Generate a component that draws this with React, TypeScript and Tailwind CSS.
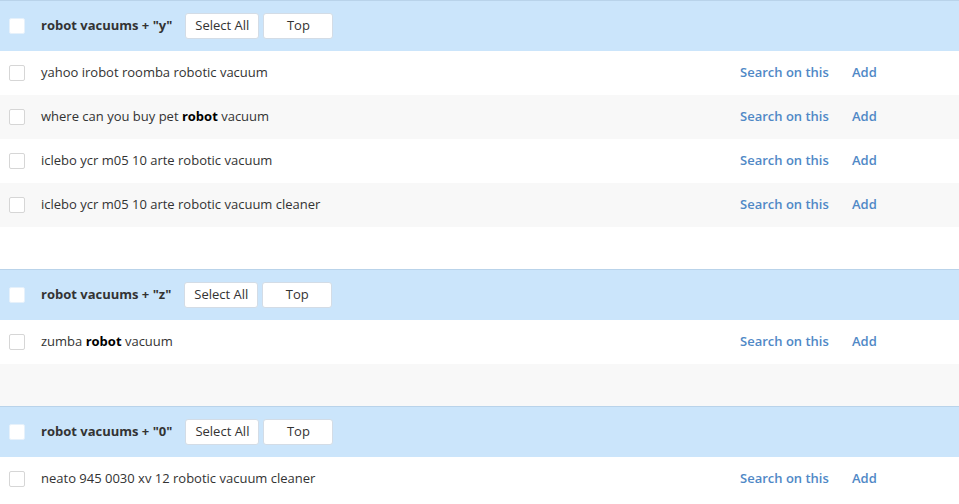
import React from 'react';

type Group = {
  suffix: string;
  rows: React.ReactNode[];
};

const GROUPS: Group[] = [
  {
    suffix: 'y',
    rows: [
      'yahoo irobot roomba robotic vacuum',
      <>
        where can you buy pet <b className="font-bold text-black">robot</b> vacuum
      </>,
      'iclebo ycr m05 10 arte robotic vacuum',
      'iclebo ycr m05 10 arte robotic vacuum cleaner',
    ],
  },
  {
    suffix: 'z',
    rows: [
      <>
        zumba <b className="font-bold text-black">robot</b> vacuum
      </>,
    ],
  },
  {
    suffix: '0',
    rows: ['neato 945 0030 xv 12 robotic vacuum cleaner'],
  },
];

// striping continues from the rows into the trailing spacer
const stripe = (i: number) => (i % 2 ? 'bg-[#f8f8f8]' : 'bg-white');

function Box({ header = false }: { header?: boolean }) {
  return (
    <span
      className={`block h-4 w-4 shrink-0 rounded-[2px] border bg-white ${
        header ? 'border-[#e6f1fb]' : 'border-[#d6d6d6]'
      }`}
    />
  );
}

function GroupHeader({ suffix }: { suffix: string }) {
  return (
    <div className="flex h-[51px] items-center border-t border-[#b9d3ea] bg-[#cbe5fb] pl-[9px]">
      <Box header />
      <span className="ml-4 -mt-px text-[13px] font-bold text-[#333]">
        robot vacuums + "{suffix}"
      </span>
      <button
        type="button"
        className="ml-[13px] h-[26px] w-[74px] rounded-[3px] border border-[#d3dce6] bg-white text-[13px] text-[#333]"
      >
        Select All
      </button>
      <button
        type="button"
        className="ml-1 h-[26px] w-[70px] rounded-[3px] border border-[#d3dce6] bg-white text-[13px] text-[#333]"
      >
        Top
      </button>
    </div>
  );
}

export default function App() {
  return (
    <div className="w-[959px] bg-white font-['Open_Sans',sans-serif] text-[13px] text-[#333]">
      {GROUPS.map((g) => (
        <div key={g.suffix}>
          <GroupHeader suffix={g.suffix} />
          {g.rows.map((r, i) => (
            <div key={i} className={`flex h-[44px] items-center pl-[9px] ${stripe(i)}`}>
              <Box />
              <span className="ml-4 flex-1">{r}</span>
              <a className="w-[112px] font-semibold text-[#5088c6]">Search on this</a>
              <a className="w-[107px] font-semibold text-[#5088c6]">Add</a>
            </div>
          ))}
          {g.suffix !== '0' && <div className={`h-[42px] ${stripe(g.rows.length)}`} />}
        </div>
      ))}
    </div>
  );
}
